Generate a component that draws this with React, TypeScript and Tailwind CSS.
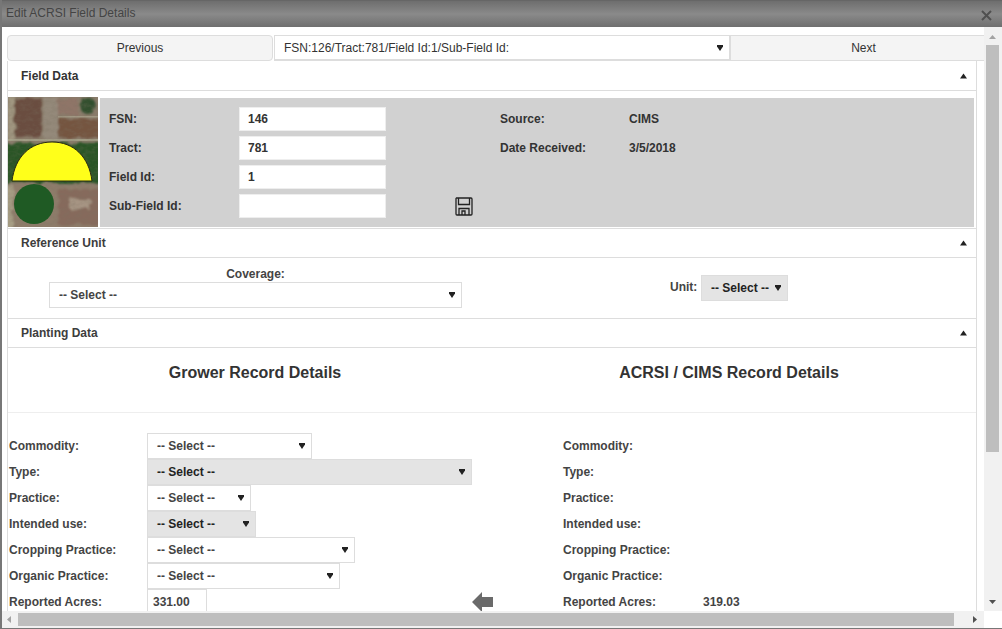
const selectWidths = [
  { label: "Commodity:", width: "w-[165px]", grey: false },
  { label: "Type:", width: "w-[325px]", grey: true },
  { label: "Practice:", width: "w-[104px]", grey: false },
  { label: "Intended use:", width: "w-[109px]", grey: true },
  { label: "Cropping Practice:", width: "w-[208px]", grey: false },
  { label: "Organic Practice:", width: "w-[193px]", grey: false },
]

function CaretDown() {
  return (
    <svg width="6" height="6" viewBox="0 0 6 6" className="shrink-0 fill-[#222]">
      <path d="M0 0 H6 V1.5 L3 6 L0 1.5 Z" />
    </svg>
  )
}

function CaretUp() {
  return (
    <svg width="7" height="6" viewBox="0 0 7 6" className="shrink-0 fill-[#222]">
      <path d="M3.5 0.5 L7 5.5 L0 5.5 Z" />
    </svg>
  )
}

function SelectBox({ className, text = "-- Select --" }: { className: string; text?: string }) {
  return (
    <div className={`flex items-center justify-between border border-[#ddd] pl-[9px] pr-[6px] ${className}`}>
      <span>{text}</span>
      <CaretDown />
    </div>
  )
}

function SectionHeader({ title, className }: { title: string; className: string }) {
  return (
    <div className={`flex items-center justify-between border-b border-[#ddd] pl-[13px] pr-[9px] font-bold ${className}`}>
      <span>{title}</span>
      <CaretUp />
    </div>
  )
}

function GreyField({ label, value, children }: { label: string; value: string; children?: React.ReactNode }) {
  return (
    <div className="flex h-[24px] items-center">
      <span className="w-[130px] font-bold">{label}</span>
      <input
        readOnly
        value={value}
        className="h-[24px] w-[147px] shrink-0 border border-[#eee] bg-white pl-[8px] font-bold text-[#333] outline-none"
      />
      {children}
    </div>
  )
}

function Satellite() {
  return (
    <svg width="90" height="130" viewBox="0 0 90 130" className="shrink-0">
      <defs>
        <filter id="rough" x="-10%" y="-10%" width="120%" height="120%">
          <feTurbulence type="fractalNoise" baseFrequency="0.12" numOctaves="3" seed="3" result="n" />
          <feDisplacementMap in="SourceGraphic" in2="n" scale="7" />
          <feGaussianBlur stdDeviation="0.9" />
        </filter>
        <filter id="grain" x="0" y="0" width="100%" height="100%">
          <feTurbulence type="fractalNoise" baseFrequency="0.16 0.28" numOctaves="3" seed="7" />
          <feColorMatrix values="0 0 0 0 0.2  0 0 0 0 0.17  0 0 0 0 0.12  0 0 0 1.3 -0.5" />
        </filter>
      </defs>
      <rect width="90" height="130" fill="#8a7c6b" />
      <g filter="url(#rough)">
        <rect x="0" y="-4" width="7" height="48" fill="#a09680" />
        <rect x="7" y="2" width="27" height="38" fill="#6b4e3f" />
        <rect x="36" y="0" width="14" height="42" fill="#94897a" />
        <rect x="50" y="2" width="20" height="16" fill="#8f7467" />
        <circle cx="80" cy="9" r="8" fill="#33502e" />
        <rect x="50" y="22" width="44" height="19" fill="#755440" />
        <rect x="-4" y="46" width="98" height="40" fill="#2a5426" />
        <rect x="-4" y="88" width="98" height="46" fill="#8e7c6a" />
        <rect x="50" y="92" width="44" height="36" fill="#866b5c" />
        <rect x="62" y="102" width="20" height="10" fill="#a69483" />
        <rect x="-4" y="88" width="9" height="46" fill="#a69d84" />
      </g>
      <rect x="0" y="42" width="90" height="2" fill="#aaa88f" opacity="0.75" />
      <rect x="50" y="19" width="40" height="1.5" fill="#b0ab94" opacity="0.6" />
      <rect width="90" height="130" filter="url(#grain)" opacity="0.4" />
      <circle cx="26" cy="107" r="20" fill="#1f5a24" />
      <path d="M4 84 C7 60 22 45 44 45 C66 45 81 60 84 84 Z" fill="#ffff1a" stroke="#2a2a12" strokeWidth="1" />
    </svg>
  )
}

function SaveIcon() {
  return (
    <svg width="18" height="19" viewBox="0 0 18 19" fill="none" stroke="#222" strokeWidth="1.3" className="ml-[69px] shrink-0">
      <path d="M1.5 1 H16 Q17 1 17 2 V17 Q17 18 16 18 H2 Q1 18 1 17 V1.5 Z" />
      <path d="M3.5 1 V7.5 H14.5 V1" />
      <path d="M4 18 V11.5 H14 V18" />
      <path d="M7 18 V14 H10 V18" />
    </svg>
  )
}

function ArrowLeft() {
  return (
    <svg width="21" height="20" viewBox="0 0 21 20" className="ml-[265px] fill-[#6a6a6a]">
      <path d="M0 10 L10 0 L10 5 L21 5 L21 15 L10 15 L10 20 Z" />
    </svg>
  )
}

export default function App() {
  return (
    <div
      className="flex h-[629px] w-[1002px] flex-col overflow-hidden border-b border-l-2 border-[#777] bg-white text-[12px] text-[#333]"
      style={{ fontFamily: '"Liberation Sans", Arial, sans-serif' }}
    >
      {/* title bar */}
      <div className="flex h-[27px] shrink-0 items-center justify-between border-t border-[#666] bg-gradient-to-b from-[#6e6e6e] via-[#8a8a8a] to-[#6f6f6f] pl-[4px] pr-[10px] text-[#444]">
        <span className="-mt-[3px]">Edit ACRSI Field Details</span>
        <svg width="11" height="11" viewBox="0 0 11 11" className="mt-[3px] stroke-[#505050]" strokeWidth="2">
          <path d="M1 1 L10 10 M10 1 L1 10" />
        </svg>
      </div>

      <div className="flex min-h-0 flex-1">
        {/* scrolled content */}
        <div className="min-w-0 flex-1 overflow-hidden pl-[5px] pt-[8px]">
          <div className="flex h-[26px]">
            <button className="w-[266px] shrink-0 rounded-sm border border-[#ddd] bg-[#f4f4f4] text-[#333]">Previous</button>
            <SelectBox className="ml-[1px] w-[456px] shrink-0 border-b-2 bg-white" text="FSN:126/Tract:781/Field Id:1/Sub-Field Id:" />
            <button className="w-[266px] shrink-0 border-y border-l border-[#ddd] bg-[#f4f4f4] text-[#333]">Next</button>
          </div>

          <div className="w-[970px] border-x border-[#ddd]">
            <SectionHeader title="Field Data" className="h-[30px]" />
            <div className="mt-[6px] flex h-[132px] border-b border-[#ddd]">
              <Satellite />
              <div className="ml-[2px] mt-[1px] flex h-[129px] w-[874px] bg-[#d1d1d1] pl-[9px] pt-[9px]">
                <div className="flex w-[391px] flex-col gap-[5px]">
                  <GreyField label="FSN:" value="146" />
                  <GreyField label="Tract:" value="781" />
                  <GreyField label="Field Id:" value="1" />
                  <GreyField label="Sub-Field Id:" value="">
                    <SaveIcon />
                  </GreyField>
                </div>
                <div className="flex flex-col gap-[5px] font-bold">
                  <div className="flex h-[24px] items-center">
                    <span className="w-[129px]">Source:</span>
                    <span>CIMS</span>
                  </div>
                  <div className="flex h-[24px] items-center">
                    <span className="w-[129px]">Date Received:</span>
                    <span>3/5/2018</span>
                  </div>
                </div>
              </div>
            </div>
            <SectionHeader title="Reference Unit" className="h-[29px] text-[#3d3d3d]" />
            <div className="flex h-[61px] border-b border-[#ddd] font-bold text-[#444]">
              <div className="ml-[41px] flex w-[413px] flex-col items-center pt-[9px]">
                <span className="h-[15px] leading-[15px]">Coverage:</span>
                <SelectBox className="h-[26px] w-full" />
              </div>
              <div className="ml-[208px] flex items-start pt-[17px]">
                <span className="mt-[3px] w-[31px]">Unit:</span>
                <SelectBox className="h-[26px] w-[87px] bg-[#e4e4e4] text-[#222]" />
              </div>
            </div>
            <SectionHeader title="Planting Data" className="h-[29px] text-[#3d3d3d]" />
            <div className="flex h-[65px] border-b border-[#eee] pb-[15px] text-[16px] font-bold">
              <div className="flex w-[494px] items-center justify-center">Grower Record Details</div>
              <div className="flex flex-1 items-center justify-center pr-5">ACRSI / CIMS Record Details</div>
            </div>
            <div className="flex pt-[20px] font-bold text-[#444]">
              <div className="w-[494px]">
                {selectWidths.map((row) => (
                  <div key={row.label} className="flex h-[26px] items-center">
                    <span className="w-[139px] pl-[1px]">{row.label}</span>
                    <SelectBox className={`h-[26px] ${row.width} ${row.grey ? "bg-[#e4e4e4] text-[#222]" : ""}`} />
                  </div>
                ))}
                <div className="flex h-[26px] items-center">
                  <span className="w-[139px] pl-[1px]">Reported Acres:</span>
                  <input
                    readOnly
                    value="331.00"
                    className="h-[26px] w-[60px] border border-[#ddd] pl-[5px] font-bold outline-none"
                  />
                  <ArrowLeft />
                </div>
              </div>
              <div className="flex-1 pl-[61px]">
                {selectWidths.map((row) => (
                  <div key={row.label} className="flex h-[26px] items-center">
                    {row.label}
                  </div>
                ))}
                <div className="flex h-[26px] items-center">
                  <span className="w-[140px]">Reported Acres:</span>
                  <span>319.03</span>
                </div>
              </div>
            </div>
          </div>
        </div>

        {/* vertical scrollbar */}
        <div className="flex w-[18px] shrink-0 flex-col bg-[#f1f1f1] pl-[2px]">
          <svg width="7" height="5" viewBox="0 0 7 5" className="ml-[3px] mt-[8px] fill-[#a3a3a3]">
            <path d="M3.5 0 L7 4 L0 4 Z" />
          </svg>
          <div className="mt-[5px] h-[407px] w-[13px] bg-[#bebebe]" />
          <svg width="7" height="5" viewBox="0 0 7 5" className="ml-[3px] mt-auto mb-[6px] fill-[#505050]">
            <path d="M0 0 L7 0 L3.5 4 Z" />
          </svg>
        </div>
      </div>

      {/* horizontal scrollbar */}
      <div className="flex h-[17px] shrink-0 items-center">
        <div className="flex h-full w-[982px] items-center bg-[#f1f1f1]">
          <svg width="5" height="7" viewBox="0 0 5 7" className="ml-[5px] fill-[#a3a3a3]">
            <path d="M4 0 L4 7 L0 3.5 Z" />
          </svg>
          <div className="ml-[6px] h-[13px] w-[936px] bg-[#bebebe]" />
          <svg width="5" height="7" viewBox="0 0 5 7" className="ml-[19px] fill-[#505050]">
            <path d="M0 0 L0 7 L4 3.5 Z" />
          </svg>
        </div>
      </div>
    </div>
  )
}
